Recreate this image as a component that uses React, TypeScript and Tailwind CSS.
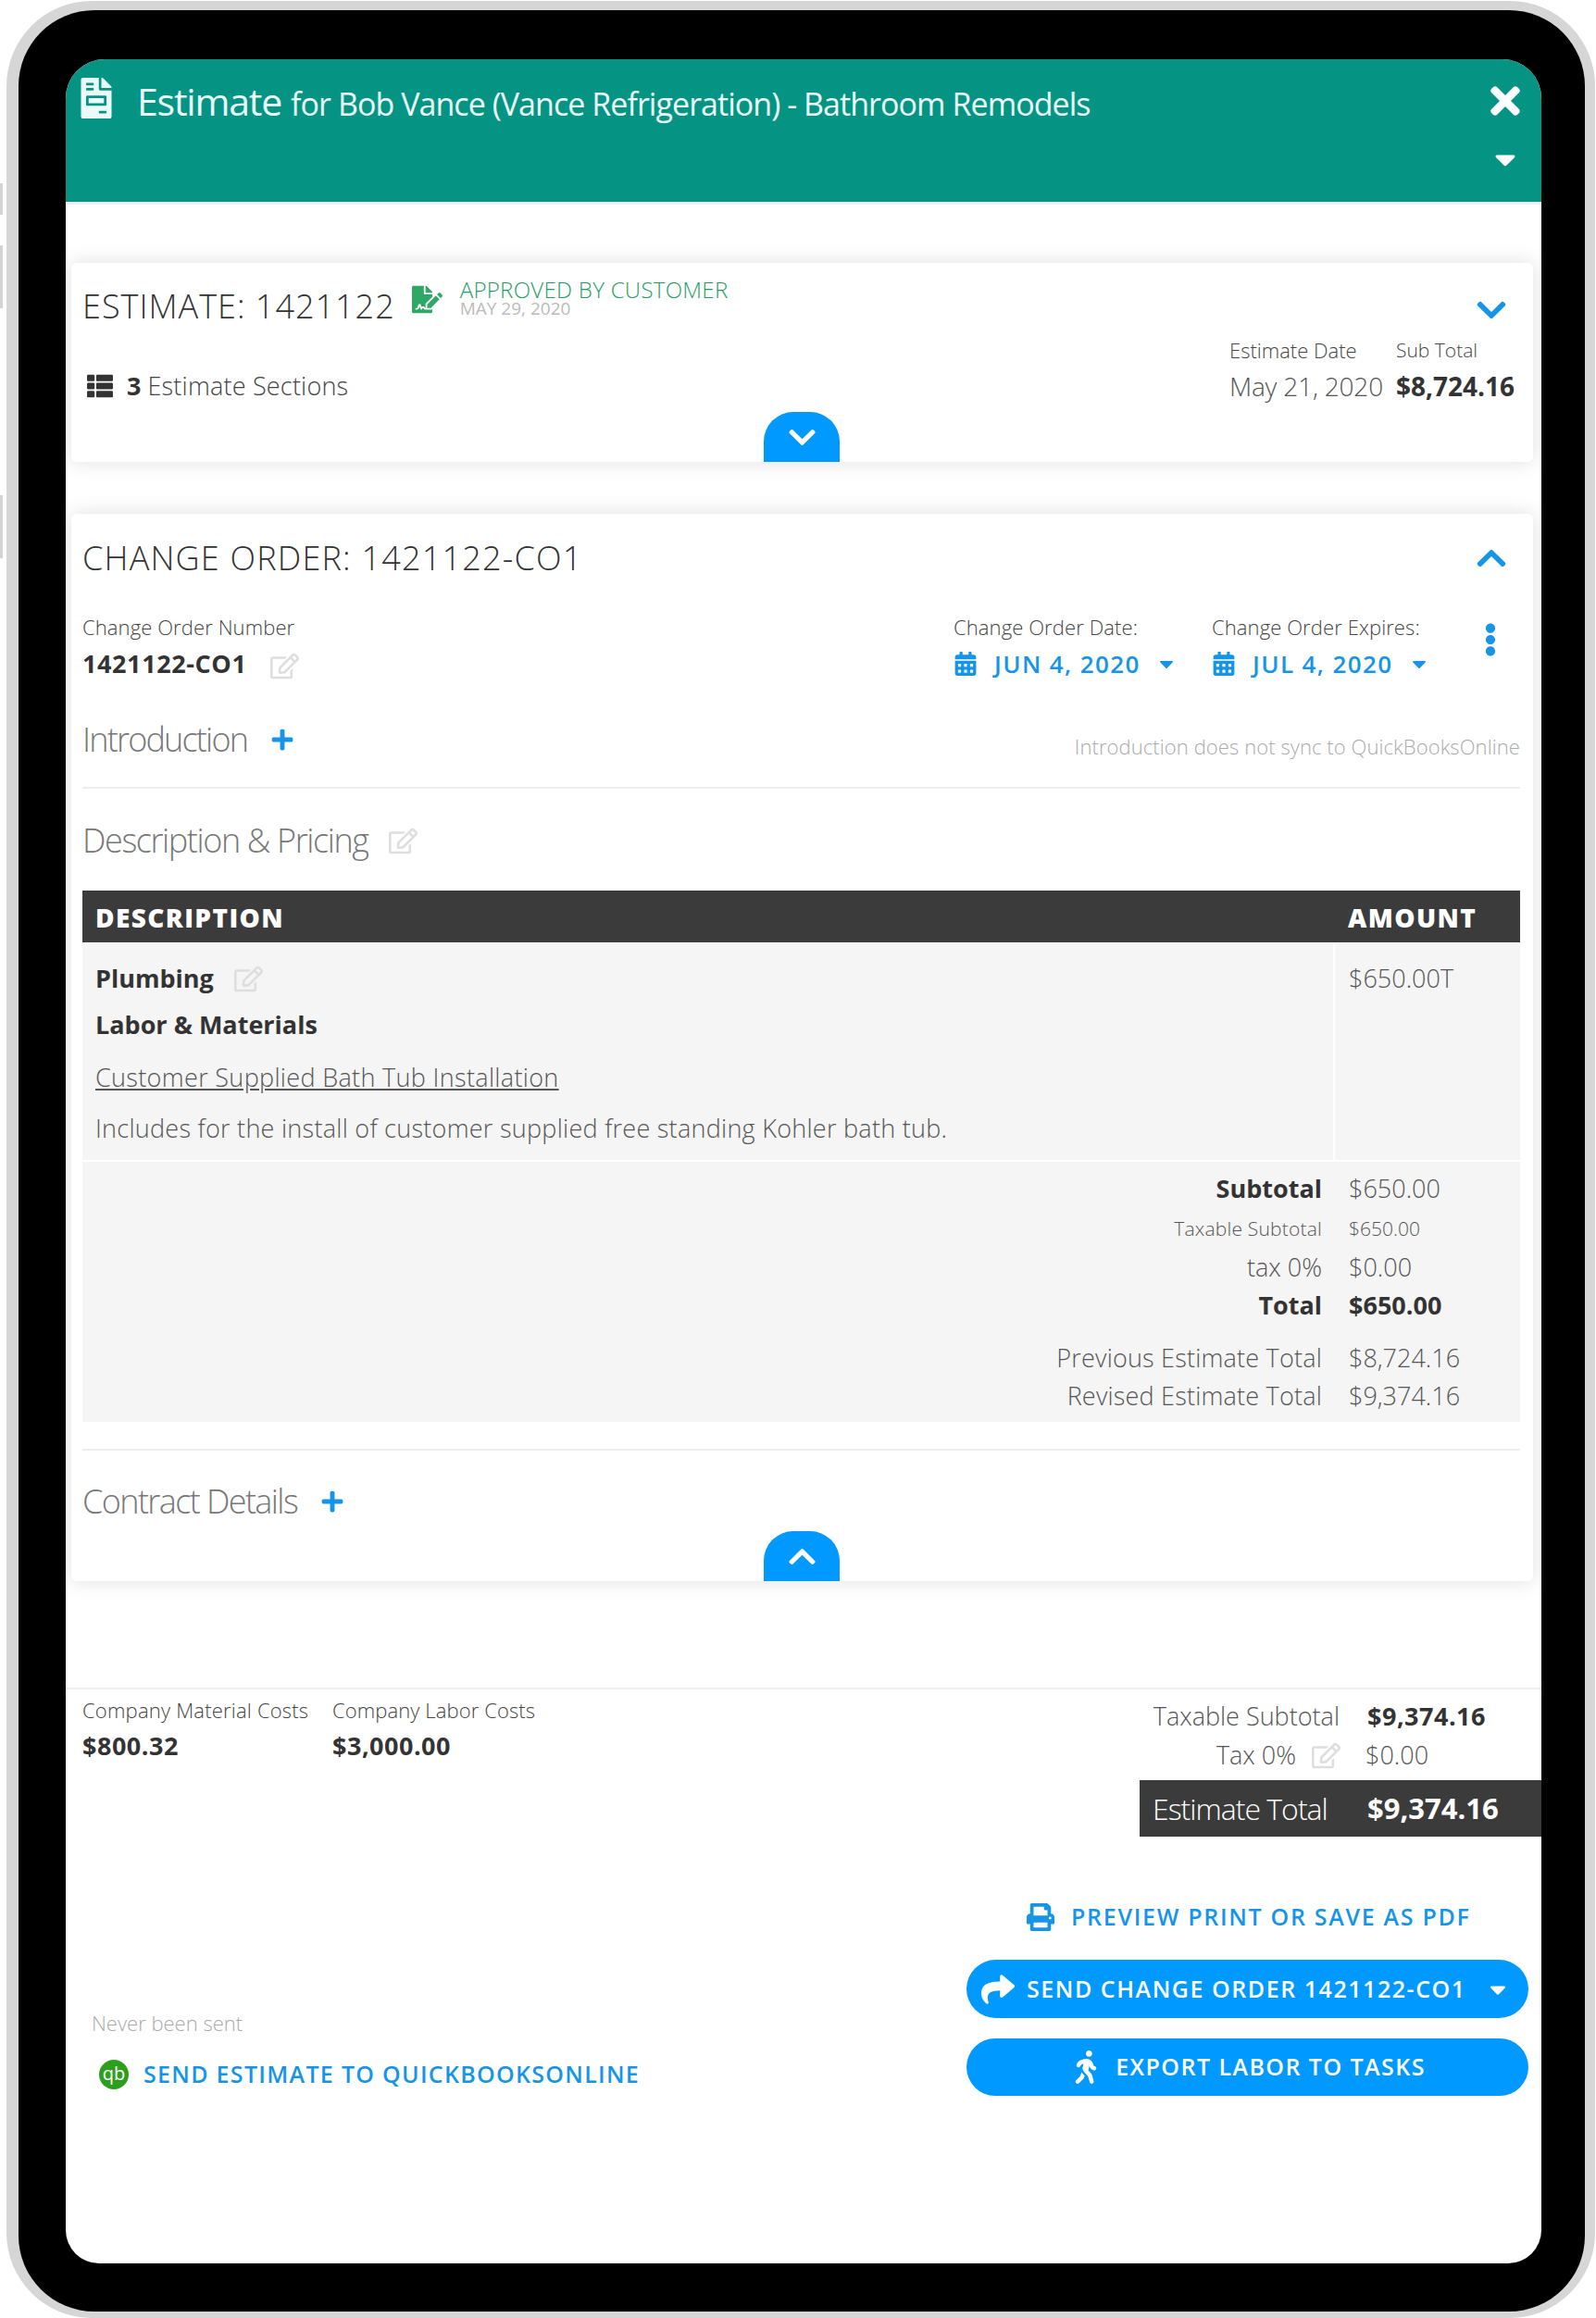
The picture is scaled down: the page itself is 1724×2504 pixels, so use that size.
import {
  FaCalendarAlt,
  FaCaretDown,
  FaChevronDown,
  FaChevronUp,
  FaEllipsisV,
  FaFileInvoice,
  FaFileSignature,
  FaPlus,
  FaPrint,
  FaRegEdit,
  FaShare,
  FaThList,
  FaTimes,
  FaWalking,
} from 'react-icons/fa'

const totals = [
  { label: 'Subtotal', value: '$650.00', cls: 'mt-[10px] text-[27px]', labelCls: 'font-bold text-[#333]', valueCls: 'font-light' },
  { label: 'Taxable Subtotal', value: '$650.00', cls: 'mt-[8px] text-[21px]', labelCls: 'font-light tracking-[0.2px]', valueCls: 'font-light' },
  { label: 'tax 0%', value: '$0.00', cls: 'mt-[5px] text-[27px]', labelCls: 'font-light', valueCls: 'font-light' },
  { label: 'Total', value: '$650.00', cls: 'mt-[5px] text-[27px]', labelCls: 'font-bold text-[#333]', valueCls: 'font-bold text-[#333]' },
  { label: 'Previous Estimate Total', value: '$8,724.16', cls: 'mt-[21px] text-[27px]', labelCls: 'font-light tracking-[0.2px]', valueCls: 'font-light' },
  { label: 'Revised Estimate Total', value: '$9,374.16', cls: 'mt-[5px] text-[27px]', labelCls: 'font-light tracking-[0.2px]', valueCls: 'font-light' },
]

function CollapseTab({ up }: { up?: boolean }) {
  return (
    <div className="absolute bottom-0 left-[748px] flex h-[54px] w-[82px] items-center justify-center rounded-t-[32px] bg-[#0099ff] text-white">
      {up ? <FaChevronUp className="text-[33px]" /> : <FaChevronDown className="text-[33px]" />}
    </div>
  )
}

function DatePick({ label, value }: { label: string; value: string }) {
  return (
    <div className="flex flex-col">
      <div className="h-[24px] text-[22px] leading-[24px] font-light tracking-[0.1px] text-[#444]">{label}</div>
      <div className="mt-[12px] flex h-[32px] items-center text-[#1695e8]">
        <FaCalendarAlt className="text-[26px]" />
        <span className="ml-[18px] text-[26px] font-semibold tracking-[1.4px]">{value}</span>
        <FaCaretDown className="ml-[16px] text-[24px]" />
      </div>
    </div>
  )
}

export default function App() {
  return (
    <div className="relative h-[2504px] w-[1724px] overflow-hidden bg-white font-['Open_Sans',sans-serif] text-[#555]">
      {/* hardware buttons on the side of the device */}
      <div className="absolute top-[198px] left-0 h-[34px] w-[3px] bg-[#d4d4d4]" />
      <div className="absolute top-[265px] left-0 h-[68px] w-[3px] bg-[#d4d4d4]" />
      <div className="absolute top-[535px] left-0 h-[68px] w-[3px] bg-[#d4d4d4]" />

      <div className="mt-[1px] ml-[7px] h-[2503px] w-[1716px] rounded-[92px] bg-[#d6d6d6] pt-[10px] pr-[11px] pb-[7px] pl-[13px]">
        <div className="h-full w-full rounded-[82px] bg-black pt-[53px] pl-[51px]">
          <div className="flex h-[2381px] w-[1594px] flex-col overflow-hidden rounded-t-[42px] rounded-b-[36px] bg-white">
            {/* header */}
            <div className="flex h-[154px] shrink-0 bg-[#059484] text-[#eafbf8]">
              <FaFileInvoice className="mt-[20px] ml-[11px] text-[44px]" />
              <div className="mt-[15px] ml-[22px] flex h-[50px] items-baseline whitespace-nowrap">
                <span className="text-[41px] font-normal tracking-[-1.2px]">Estimate</span>
                <span className="ml-[10px] text-[34px] tracking-[-0.95px]">for Bob Vance (Vance Refrigeration) - Bathroom Remodels</span>
              </div>
              <div className="mr-[16px] ml-auto flex flex-col items-center">
                <FaTimes className="mt-[22px] text-[46px] text-white" />
                <FaCaretDown className="mt-[22px] text-[36px] text-white" />
              </div>
            </div>
            <div className="h-[3px] shrink-0 bg-[#e9f5f4]" />

            {/* estimate card */}
            <div className="relative mt-[63px] ml-[6px] h-[215px] w-[1579px] shrink-0 rounded-[6px] bg-white pl-[12px] shadow-[0_0_22px_rgba(0,0,0,0.13)]">
              <div className="flex h-[78px] items-start">
                <div className="mt-[25px] text-[36px] leading-[44px] font-light tracking-[1px] whitespace-nowrap text-[#333]">ESTIMATE: 1421122</div>
                <FaFileSignature className="mt-[23px] ml-[18px] text-[33px] text-[#2fa866]" />
                <div className="ml-[19px] flex flex-col">
                  <div className="mt-[19px] text-[24px] leading-[20px] font-light tracking-[0.3px] whitespace-nowrap text-[#1f9d61]">APPROVED BY CUSTOMER</div>
                  <div className="mt-[3px] text-[19px] leading-[14px] tracking-[0px] text-[#bbb]">MAY 29, 2020</div>
                </div>
                <FaChevronDown className="mt-[33px] mr-[27px] ml-auto text-[36px] text-[#1695e8]" />
              </div>
              <div className="flex items-start">
                <div className="mt-[40px] flex h-[30px] items-center text-[27px] whitespace-nowrap">
                  <FaThList className="ml-[5px] shrink-0 text-[28px] text-[#333]" />
                  <span className="ml-[15px] font-bold text-[#333]">3</span>
                  <span className="ml-[7px] font-light tracking-[0.2px] text-[#444]">Estimate Sections</span>
                </div>
                <div className="ml-auto flex w-[180px] flex-col">
                  <div className="mt-[3px] h-[26px] text-[22px] leading-[26px] font-light text-[#444]">Estimate Date</div>
                  <div className="mt-[9px] text-[28px] leading-[34px] font-light tracking-[-0.2px] whitespace-nowrap">May 21, 2020</div>
                </div>
                <div className="flex w-[148px] flex-col">
                  <div className="mt-[3px] h-[26px] text-[21px] leading-[26px] font-light text-[#444]">Sub Total</div>
                  <div className="mt-[9px] text-[28px] leading-[34px] font-bold whitespace-nowrap text-[#333]">$8,724.16</div>
                </div>
              </div>
              <CollapseTab />
            </div>

            {/* change order card */}
            <div className="relative mt-[56px] ml-[6px] h-[1153px] w-[1579px] shrink-0 rounded-[6px] bg-white pr-[13px] pl-[12px] shadow-[0_0_22px_rgba(0,0,0,0.13)]">
              <div className="flex h-[95px] items-start">
                <div className="mt-[26px] text-[36px] leading-[44px] font-light tracking-[1.2px] whitespace-nowrap text-[#333]">CHANGE ORDER: 1421122-CO1</div>
                <FaChevronUp className="mt-[30px] mr-[14px] ml-auto text-[36px] text-[#1695e8]" />
              </div>
              <div className="flex h-[121px] items-start">
                <div className="flex w-[941px] shrink-0 flex-col">
                  <div className="mt-[15px] h-[24px] text-[22px] leading-[24px] font-light tracking-[0.1px] text-[#444]">Change Order Number</div>
                  <div className="mt-[12px] flex h-[32px] items-center">
                    <span className="text-[27px] font-bold tracking-[0.6px] text-[#333]">1421122-CO1</span>
                    <FaRegEdit className="mt-[4px] ml-[25px] text-[31px] text-[#dedede]" />
                  </div>
                </div>
                <div className="mt-[15px] w-[279px] shrink-0">
                  <DatePick label="Change Order Date:" value="JUN 4, 2020" />
                </div>
                <div className="mt-[15px] w-[283px] shrink-0">
                  <DatePick label="Change Order Expires:" value="JUL 4, 2020" />
                </div>
                <FaEllipsisV className="mt-[23px] text-[36px] text-[#1695e8]" />
              </div>
              <div className="flex h-[56px] items-center">
                <span className="text-[36px] font-light tracking-[-1.8px] text-[#777]">Introduction</span>
                <FaPlus className="ml-[25px] text-[26px] text-[#1695e8]" />
                <span className="mt-[14px] mr-[1px] ml-auto text-[22px] font-light tracking-[0.08px] text-[#aaa]">Introduction does not sync to QuickBooksOnline</span>
              </div>
              <div className="mt-[23px] mr-px h-[2px] bg-[#eeeeee]" />

              <div className="mt-[34px] flex h-[44px] items-center">
                <span className="text-[36px] font-light tracking-[-1.4px] text-[#777]">Description &amp; Pricing</span>
                <FaRegEdit className="ml-[22px] text-[31px] text-[#dedede]" />
              </div>

              {/* line items */}
              <div className="mt-[32px] mr-px">
                <div className="flex h-[56px] items-center bg-[#3b3b3b] pt-[2px] pl-[14px] text-[28px] font-extrabold tracking-[1.4px] text-white">
                  <span className="w-[1353px]">DESCRIPTION</span>
                  <span>AMOUNT</span>
                </div>
                <div className="mt-px grid h-[234px] grid-cols-[1351px_1fr] gap-x-[2px]">
                  <div className="bg-[#f5f5f5] pt-[22px] pl-[14px] text-[27px] leading-[32px]">
                    <div className="flex items-center">
                      <span className="font-bold text-[#333]">Plumbing</span>
                      <FaRegEdit className="ml-[22px] text-[31px] text-[#dedede]" />
                    </div>
                    <div className="mt-[18px] font-bold text-[#333]">Labor &amp; Materials</div>
                    <div className="mt-[25px] font-light tracking-[0.33px] underline">Customer Supplied Bath Tub Installation</div>
                    <div className="mt-[23px] font-light tracking-[0.27px]">Includes for the install of customer supplied free standing Kohler bath tub.</div>
                  </div>
                  <div className="bg-[#f5f5f5] pt-[22px] pl-[15px] text-[27px] leading-[32px] font-light">$650.00T</div>
                </div>
                <div className="mt-[2px] h-[281px] bg-[#f5f5f5] pt-px">
                  {totals.map((row) => (
                    <div key={row.label} className={`flex h-[36px] items-center ${row.cls}`}>
                      <span className={`w-[1339px] text-right ${row.labelCls}`}>{row.label}</span>
                      <span className={`ml-[29px] ${row.valueCls}`}>{row.value}</span>
                    </div>
                  ))}
                </div>
              </div>

              <div className="mt-[29px] mr-px h-[2px] bg-[#eeeeee]" />
              <div className="mt-[33px] flex h-[44px] items-center">
                <span className="text-[36px] font-light tracking-[-1.6px] text-[#777]">Contract Details</span>
                <FaPlus className="ml-[25px] text-[26px] text-[#1695e8]" />
              </div>
              <CollapseTab up />
            </div>

            {/* totals */}
            <div className="mt-[115px] flex h-[160px] shrink-0 border-t-2 border-[#eeeeee]">
              <div className="mt-[9px] ml-[18px] w-[270px] shrink-0">
                <div className="h-[26px] text-[22px] leading-[26px] font-light tracking-[0.2px] whitespace-nowrap text-[#444]">Company Material Costs</div>
                <div className="mt-[9px] text-[27px] leading-[34px] font-bold tracking-[0.5px] text-[#333]">$800.32</div>
              </div>
              <div className="mt-[9px] w-[400px] shrink-0">
                <div className="h-[26px] text-[22px] leading-[26px] font-light tracking-[0.1px] whitespace-nowrap text-[#444]">Company Labor Costs</div>
                <div className="mt-[9px] text-[27px] leading-[34px] font-bold tracking-[0.5px] text-[#333]">$3,000.00</div>
              </div>
              <div className="ml-auto flex w-[434px] flex-col">
                <div className="mt-[12px] flex h-[34px] items-center text-[27px]">
                  <span className="w-[216px] text-right font-light">Taxable Subtotal</span>
                  <span className="ml-[30px] font-bold tracking-[0.5px] text-[#333]">$9,374.16</span>
                </div>
                <div className="mt-[8px] flex h-[34px] items-center text-[27px]">
                  <span className="w-[169px] text-right font-light">Tax 0%</span>
                  <FaRegEdit className="ml-[17px] text-[31px] text-[#dedede]" />
                  <span className="ml-[27px] font-light">$0.00</span>
                </div>
                <div className="mt-[10px] flex h-[61px] shrink-0 items-center bg-[#3b3b3b] pl-[14px] text-white">
                  <span className="w-[232px] text-[32px] font-light tracking-[-1px]">Estimate Total</span>
                  <span className="text-[31px] font-bold">$9,374.16</span>
                </div>
              </div>
            </div>

            {/* actions */}
            <div className="flex flex-1 items-start">
              <div className="mt-[188px] ml-[28px] w-[945px] shrink-0">
                <div className="h-[28px] text-[22px] leading-[28px] font-light text-[#aaa]">Never been sent</div>
                <div className="mt-[26px] flex h-[32px] items-center">
                  <span className="ml-[8px] flex h-[32px] w-[32px] items-center justify-center rounded-full bg-[#2ca01c] pb-[2px] text-[20px] text-white">qb</span>
                  <span className="ml-[16px] text-[25px] font-semibold tracking-[1.3px] whitespace-nowrap text-[#1695e8]">SEND ESTIMATE TO QUICKBOOKSONLINE</span>
                </div>
              </div>
              <div className="flex w-[607px] flex-col">
                <div className="mt-[74px] flex h-[28px] items-center pl-[65px] text-[#1695e8]">
                  <FaPrint className="text-[30px]" />
                  <span className="ml-[18px] text-[25px] font-semibold tracking-[1.7px] whitespace-nowrap">PREVIEW PRINT OR SAVE AS PDF</span>
                </div>
                <div className="mt-[32px] flex h-[63px] items-center rounded-full bg-[#0099ff] pl-[16px] text-white">
                  <FaShare className="text-[36px]" />
                  <span className="ml-[13px] text-[25px] font-semibold tracking-[1.55px] whitespace-nowrap">SEND CHANGE ORDER 1421122-CO1</span>
                  <FaCaretDown className="ml-[20px] text-[28px]" />
                </div>
                <div className="mt-[22px] flex h-[62px] items-center justify-center rounded-full bg-[#0099ff] text-white">
                  <FaWalking className="text-[36px]" />
                  <span className="ml-[14px] text-[25px] font-semibold tracking-[1.45px] whitespace-nowrap">EXPORT LABOR TO TASKS</span>
                </div>
              </div>
            </div>
          </div>
        </div>
      </div>
    </div>
  )
}
